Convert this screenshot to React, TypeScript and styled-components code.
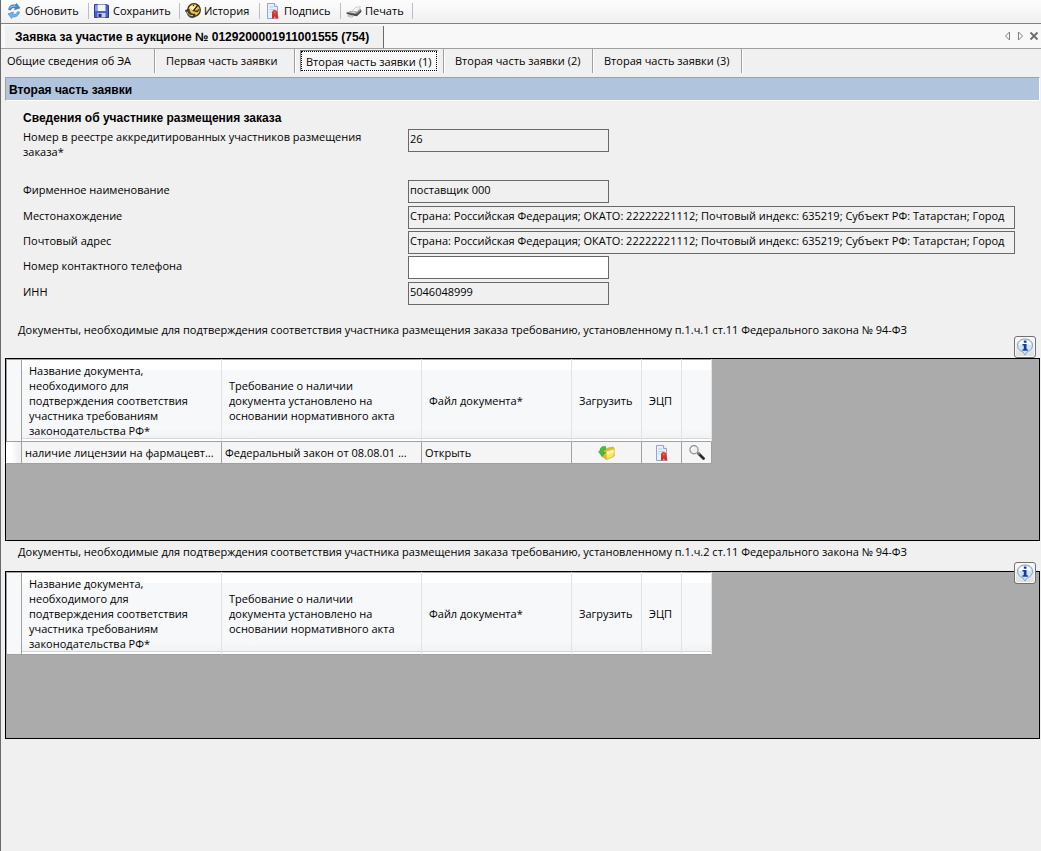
import React from 'react';
import styled, { createGlobalStyle, css } from 'styled-components';

const GlobalStyle = createGlobalStyle`
  * { box-sizing: border-box; }
  body {
    margin: 0;
    background: #f0f0f0;
    color: #000;
    font: 11px/15px "Open Sans", "Noto Sans", sans-serif;
  }
  button, input, table { font: inherit; color: inherit; }
`;

const boldText = css`
  font: 700 12px/15px "Liberation Sans", Arial, sans-serif;
`;

const Window = styled.div`
  min-height: 100vh;
  border-left: 1px solid #696969;
  background: #f0f0f0;
`;

const Toolbar = styled.div`
  display: flex;
  align-items: flex-start;
  height: 24px;
  padding-top: 3px;
  background: linear-gradient(#fdfdfd, #f0f0f0);
  border-bottom: 1px solid #808080;
`;

const ToolButton = styled.button<{ $width: number }>`
  display: flex;
  align-items: center;
  gap: 3px;
  width: ${(p) => p.$width}px;
  height: 16px;
  padding: 0 0 0 5px;
  border: 0;
  border-right: 1px solid #bdbdbd;
  background: none;
  line-height: 16px;
  white-space: nowrap;
  svg { flex: none; }
`;

const DocumentBar = styled.div`
  display: flex;
  align-items: flex-end;
  height: 25px;
  padding-left: 4px;
  background: #f8f8f8;
  border-bottom: 1px solid #a0a0a0;
`;

const DocumentTab = styled.button`
  ${boldText}
  height: 22px;
  width: 379px;
  padding: 1px 0 0 10px;
  border: 0;
  border-right: 1px solid #696969;
  background: #f0f0f0;
  text-align: left;
  white-space: nowrap;
`;

const BarControls = styled.div`
  display: flex;
  align-self: center;
  gap: 3px;
  margin-left: auto;
  padding-right: 2px;
`;

const IconButton = styled.button`
  display: flex;
  padding: 0;
  border: 0;
  background: none;
`;

const TabBar = styled.div`
  display: flex;
  height: 28px;
  padding-bottom: 4px;
`;

const TabSlot = styled.div<{ $width: number }>`
  width: ${(p) => p.$width}px;
  padding: 1px 5px 1px;
  border-right: 1px solid #a0a0a0;
  box-shadow: 1px 0 0 #fff;
`;

const Tab = styled.button<{ $selected?: boolean; $inset: number }>`
  width: 100%;
  height: 22px;
  padding: 0 0 2px ${(p) => p.$inset}px;
  border: 1px solid transparent;
  background: none;
  text-align: left;
  white-space: nowrap;
  ${(p) =>
    p.$selected &&
    css`
      padding-bottom: 0;
      background: #f8f8f8;
      border: 1px solid #808080;
      border-right-color: #fff;
      border-bottom-color: #fff;
      outline: 1px dotted #000;
      outline-offset: -2px;
    `}
`;

const Page = styled.main`
  padding: 0 1px 0 4px;
`;

const Banner = styled.h1`
  ${boldText}
  height: 24px;
  margin: 0;
  padding: 5px 3px 0;
  background: #b0c4de;
  border: 1px solid #a0a0a0;
  border-right-color: #fff;
  border-bottom-color: #fff;
`;

const Form = styled.form`
  padding: 9px 25px 11px 18px;
`;

const FormTitle = styled.h2`
  ${boldText}
  margin: 0;
  padding: 1px 0 3px;
`;

const Field = styled.div<{ $height: number }>`
  display: grid;
  grid-template-columns: 385px 1fr;
  min-height: ${(p) => p.$height}px;
`;

const FieldLabel = styled.label<{ $raised?: boolean }>`
  padding: ${(p) => (p.$raised ? 0 : 2)}px 20px 0 0;
`;

const FieldInput = styled.input<{ $wide?: boolean }>`
  width: 100%;
  max-width: ${(p) => (p.$wide ? 'none' : '201px')};
  height: 23px;
  padding: 0 1px 5px;
  border: 1px solid #696969;
  border-radius: 0;
  background: #fff;
  outline: 0;
  &:read-only { background: #f0f0f0; }
`;

const Section = styled.section`
  position: relative;
`;

const SectionTitle = styled.h3<{ $gap: number }>`
  margin: 0;
  padding: 3px 0 ${(p) => p.$gap}px 13px;
  font-size: 11px;
  font-weight: 400;
  line-height: 15px;
  white-space: nowrap;
`;

const InfoButton = styled.button<{ $top: number }>`
  position: absolute;
  top: ${(p) => p.$top}px;
  right: 4px;
  display: flex;
  align-items: center;
  justify-content: center;
  width: 22px;
  height: 22px;
  padding: 0;
  border: 1px solid #707070;
  border-radius: 3px;
  background: linear-gradient(#fafafa, #dedede);
  box-shadow: inset 0 0 0 1px #f8f8f8;
`;

const GridArea = styled.div<{ $height: number }>`
  min-height: ${(p) => p.$height}px;
  border: 1px solid #000;
  background: #ababab;
`;

const DataTable = styled.table`
  width: 706px;
  table-layout: fixed;
  border-collapse: separate;
  border-spacing: 0;
`;

const HeadCell = styled.th`
  height: 83px;
  padding: 0 9px 0 7px;
  border-right: 1px solid #e2e3e5;
  border-bottom: 1px solid #a0a0a0;
  background: linear-gradient(#a0a0a0 0 1px, #fff 1px 11px, #f7f8fa 11px 70px, #f1f2f4 79px, #d5d6d8 79px 80px, #fff 80px);
  font-weight: 400;
  text-align: left;
  vertical-align: middle;
`;

const CornerCell = styled.td`
  padding: 0;
  border-right: 1px solid #a0a0a0;
  border-bottom: 1px solid #a0a0a0;
  background: #f7f8fa;
  box-shadow: inset 1px 1px 0 #a0a0a0;
`;

const RowMarker = styled.td`
  padding: 0;
  border-right: 1px solid #a0a0a0;
  border-bottom: 1px solid #a0a0a0;
  background: linear-gradient(90deg, #fff 0 5px, #f0f1f3 12px);
`;

const Cell = styled.td`
  height: 22px;
  padding: 0 3px;
  border-right: 1px solid #a0a0a0;
  border-bottom: 1px solid #a0a0a0;
  background: #f5f5f5;
  white-space: nowrap;
  ${IconButton} { margin: 0 auto; }
`;

const RefreshIcon = () => (
  <svg width="16" height="16" viewBox="0 0 16 16">
    <path d="M2.500 6.500C3 3 6 1.200 9 2L10.500.5 14 5l-5.500 1.800.8-2C7 4.300 5.200 5 4.500 7.200z" fill="#3d8ad0" stroke="#2465a8" strokeWidth=".5" />
    <path d="M13.500 9c-.5 3.500-3.500 5.500-6.500 4.800L5.500 15.500 2 10.800 7.500 9l-.8 2.200c2.300.5 4-.3 4.800-2.500z" fill="#74b2e8" stroke="#2f74b8" strokeWidth=".5" />
    <path d="M3.500 5.500C5 3.300 7 2.800 9.500 3.200" fill="none" stroke="#a9d2f4" />
  </svg>
);

const DiskIcon = () => (
  <svg width="16" height="16" viewBox="0 0 16 16">
    <path d="M.5 1.500h12l2 1v12H.5z" fill="#4a62c4" stroke="#2b3a94" />
    <path d="M3.500 1.500h8V8h-8z" fill="#f2f6fc" />
    <path d="M1 2h2v6H1z" fill="#8798e8" />
    <path d="M3.500 10h8v4.500h-8z" fill="#c8cfe4" />
    <path d="M4.500 10.800h3V14h-3z" fill="#222c78" />
  </svg>
);

const HistoryIcon = () => (
  <svg width="16" height="16" viewBox="0 0 16 16">
    <circle cx="9" cy="7" r="6.300" fill="#eec04a" stroke="#3c3217" strokeWidth="1.300" />
    <path d="M4.500 5A5 5 0 0 1 11 2.500L8.500 7.500z" fill="#fff3b8" />
    <path d="M13 2 8.500 7.500l4.500 1M8.500 2v1.200M14.200 7h-1.400" fill="none" stroke="#2a2416" strokeWidth="1.300" />
    <path d="M0 7.500 4 6l.8 2.500c1 2 3 2.800 5.200 2.500v3c-3.500 1.500-7 .5-8-4z" fill="#43432c" stroke="#222" strokeWidth=".5" />
    <path d="M2 8.500c1 3 3 4.500 6 4" fill="none" stroke="#d2c270" />
  </svg>
);

const CertificateIcon = () => (
  <svg width="16" height="16" viewBox="0 0 16 16">
    <path d="M2.500.5h7l3 3v12h-10z" fill="#e7f0fb" stroke="#8ba9cf" />
    <path d="M9.500.5v3h3" fill="#fff" stroke="#8ba9cf" />
    <path d="M4.500 4h4M4.500 6.500h6M4.500 9h2" stroke="#b5cae5" />
    <path d="M7 9v6.500h2l.8-2 1 2h2.700L12 9z" fill="#d9301f" />
    <circle cx="9.700" cy="9.500" r="2.600" fill="#dc3a28" />
    <circle cx="9.700" cy="9.300" r=".9" fill="#f07b66" />
  </svg>
);

const PrinterIcon = () => (
  <svg width="16" height="16" viewBox="0 0 16 16">
    <path d="M5.500 8.500 9.500 4.500l5-1-3 5z" fill="#f8f8f8" stroke="#b0b0b0" strokeWidth=".6" />
    <path d="M.5 9.500 5 8l6 1 3.500-3.500.8 2-4.300 5.500-3-.5-6-1.500z" fill="#8a8d90" />
    <path d="m.5 9.500 10 1.800L15.300 7v2l-4.500 4.300-10-2.300z" fill="#43474b" />
    <path d="m3 9.200 3-.7 4 .8-1.200.9z" fill="#d8dadc" />
    <path d="m2.500 12 5 1-2 1.300-4-1.200z" fill="#e8e8e8" stroke="#888" strokeWidth=".5" />
  </svg>
);

const FolderIcon = () => (
  <svg width="18" height="16" viewBox="0 0 18 16">
    <path d="m4 5 4-.5L9.500 3l6-1 .8 9L8.500 14.500 4 11.500z" fill="#e3bd2e" stroke="#c39a1d" strokeWidth=".5" />
    <path d="m8 6 8.500-2.500-.8 8-7.200 3z" fill="#fbe75c" stroke="#d0ab2a" strokeWidth=".5" />
    <path d="m9 7 6.500-2-.2 3L9 10z" fill="#fff6a8" />
    <path d="M7.500 1.500C4 1 1.500 3 2 6.500H.5L4 11.500 7.500 7.500H5.300C5.300 5.500 6 4.700 8 4.500z" fill="#46bd38" stroke="#2a9126" strokeWidth=".5" />
  </svg>
);

const MagnifierIcon = () => (
  <svg width="16" height="16" viewBox="0 0 16 16">
    <path d="m9.500 8.500 5 5" stroke="#2b2b2b" strokeWidth="2.800" strokeLinecap="round" />
    <path d="m8.500 7.500 2 2" stroke="#999" strokeWidth="1.400" />
    <circle cx="5" cy="4.800" r="4.100" fill="#eef1f4" stroke="#8d8f92" strokeWidth="1.200" />
    <path d="M2.500 5A2.500 2.500 0 0 1 5 2.500" fill="none" stroke="#fff" strokeWidth="1.200" />
  </svg>
);

const InfoIcon = () => (
  <svg width="18" height="18" viewBox="0 0 18 18">
    <path d="M9 1c4.500 0 7.500 2.600 7.500 6.400 0 3.400-2.400 5.600-5.200 6.300L9 17l-2.300-3.300C3.900 13 1.500 10.800 1.500 7.400 1.500 3.600 4.500 1 9 1z" fill="#cfe4f7" stroke="#7fa3c8" strokeWidth="1" />
    <path d="M3 7c.5-3.500 3-5 6-5s5.500 1.500 6 5c-3-1.500-9-1.500-12 0z" fill="#fff" />
    <path d="M7.800 2.500h2.700v2.300H7.800zM6.500 6h4v5.200h1.300v1.500H6.500v-1.500h1.300V7.500H6.500z" fill="#173c94" />
  </svg>
);

const PrevIcon = () => (
  <svg width="10" height="10" viewBox="0 0 10 10">
    <path d="M6.500 1v8l-4-4z" fill="none" stroke="#808080" />
  </svg>
);

const NextIcon = () => (
  <svg width="10" height="10" viewBox="0 0 10 10">
    <path d="M2.500 1v8l4-4z" fill="none" stroke="#808080" />
  </svg>
);

const CloseIcon = () => (
  <svg width="10" height="10" viewBox="0 0 10 10">
    <path d="m1.500 1.500 7 7m0-7-7 7" stroke="#6c6c6c" strokeWidth="1.800" />
  </svg>
);

const tools = [
  { label: 'Обновить', width: 88, icon: <RefreshIcon /> },
  { label: 'Сохранить', width: 91, icon: <DiskIcon /> },
  { label: 'История', width: 80, icon: <HistoryIcon /> },
  { label: 'Подпись', width: 81, icon: <CertificateIcon /> },
  { label: 'Печать', width: 72, icon: <PrinterIcon /> },
];

const tabs = [
  { label: 'Общие сведения об ЭА', width: 154, inset: 0 },
  { label: 'Первая часть заявки', width: 140, inset: 5 },
  { label: 'Вторая часть заявки (1)', width: 149, inset: 5, selected: true },
  { label: 'Вторая часть заявки (2)', width: 149, inset: 5 },
  { label: 'Вторая часть заявки (3)', width: 149, inset: 5 },
];

const address =
  'Страна: Российская Федерация; ОКАТО: 22222221112; Почтовый индекс: 635219; Субъект РФ: Татарстан; Город';

const fields = [
  { id: 'registry', label: 'Номер в реестре аккредитированных участников размещения заказа*', value: '26', height: 51 },
  { id: 'company', label: 'Фирменное наименование', value: 'поставщик 000', height: 26 },
  { id: 'location', label: 'Местонахождение', value: address, height: 25, wide: true },
  { id: 'postal', label: 'Почтовый адрес', value: address, height: 25, wide: true },
  { id: 'phone', label: 'Номер контактного телефона', value: '', height: 26, editable: true },
  { id: 'inn', label: 'ИНН', value: '5046048999', height: 26 },
];

interface DocumentRow {
  name: string;
  act: string;
  file: string;
}

const licences: DocumentRow[] = [
  { name: 'наличие лицензии на фармацевт...', act: 'Федеральный закон от 08.08.01 ...', file: 'Открыть' },
];

const columnWidths = [16, 200, 200, 150, 70, 40, 30];

const DocumentTable = ({ rows }: { rows: DocumentRow[] }) => (
  <DataTable>
    <colgroup>
      {columnWidths.map((width, i) => (
        <col key={i} width={width} />
      ))}
    </colgroup>
    <thead>
      <tr>
        <CornerCell />
        <HeadCell>Название документа, необходимого для подтверждения соответствия участника требованиям законодательства РФ*</HeadCell>
        <HeadCell>Требование о наличии документа установлено на основании нормативного акта</HeadCell>
        <HeadCell>Файл документа*</HeadCell>
        <HeadCell>Загрузить</HeadCell>
        <HeadCell>ЭЦП</HeadCell>
        <HeadCell />
      </tr>
    </thead>
    <tbody>
      {rows.map((row) => (
        <tr key={row.name}>
          <RowMarker />
          <Cell>{row.name}</Cell>
          <Cell>{row.act}</Cell>
          <Cell>{row.file}</Cell>
          <Cell><IconButton type="button" aria-label="Загрузить"><FolderIcon /></IconButton></Cell>
          <Cell><IconButton type="button" aria-label="ЭЦП"><CertificateIcon /></IconButton></Cell>
          <Cell><IconButton type="button" aria-label="Просмотр"><MagnifierIcon /></IconButton></Cell>
        </tr>
      ))}
    </tbody>
  </DataTable>
);

export default function App() {
  return (
    <>
      <GlobalStyle />
      <Window>
        <Toolbar>
          {tools.map((tool) => (
            <ToolButton key={tool.label} type="button" $width={tool.width}>
              {tool.icon}
              {tool.label}
            </ToolButton>
          ))}
        </Toolbar>
        <DocumentBar>
          <DocumentTab type="button">Заявка за участие в аукционе № 0129200001911001555 (754)</DocumentTab>
          <BarControls>
            <IconButton type="button" aria-label="Назад"><PrevIcon /></IconButton>
            <IconButton type="button" aria-label="Вперёд"><NextIcon /></IconButton>
            <IconButton type="button" aria-label="Закрыть"><CloseIcon /></IconButton>
          </BarControls>
        </DocumentBar>
        <TabBar>
          {tabs.map((tab) => (
            <TabSlot key={tab.label} $width={tab.width}>
              <Tab type="button" $selected={tab.selected} $inset={tab.inset}>{tab.label}</Tab>
            </TabSlot>
          ))}
        </TabBar>
        <Page>
          <Banner>Вторая часть заявки</Banner>
          <Form>
            <FormTitle>Сведения об участнике размещения заказа</FormTitle>
            {fields.map((field) => (
              <Field key={field.id} $height={field.height}>
                <FieldLabel htmlFor={field.id} $raised={field.id === 'registry'}>{field.label}</FieldLabel>
                <FieldInput id={field.id} defaultValue={field.value} readOnly={!field.editable} $wide={field.wide} />
              </Field>
            ))}
          </Form>
          <Section>
            <SectionTitle $gap={21}>
              Документы, необходимые для подтверждения соответствия участника размещения заказа требованию, установленному п.1.ч.1 ст.11 Федерального закона № 94-ФЗ
            </SectionTitle>
            <InfoButton type="button" aria-label="Справка" $top={17}><InfoIcon /></InfoButton>
            <GridArea $height={183}>
              <DocumentTable rows={licences} />
            </GridArea>
          </Section>
          <Section>
            <SectionTitle $gap={12}>
              Документы, необходимые для подтверждения соответствия участника размещения заказа требованию, установленному п.1.ч.2 ст.11 Федерального закона № 94-ФЗ
            </SectionTitle>
            <InfoButton type="button" aria-label="Справка" $top={21}><InfoIcon /></InfoButton>
            <GridArea $height={168}>
              <DocumentTable rows={[]} />
            </GridArea>
          </Section>
        </Page>
      </Window>
    </>
  );
}
